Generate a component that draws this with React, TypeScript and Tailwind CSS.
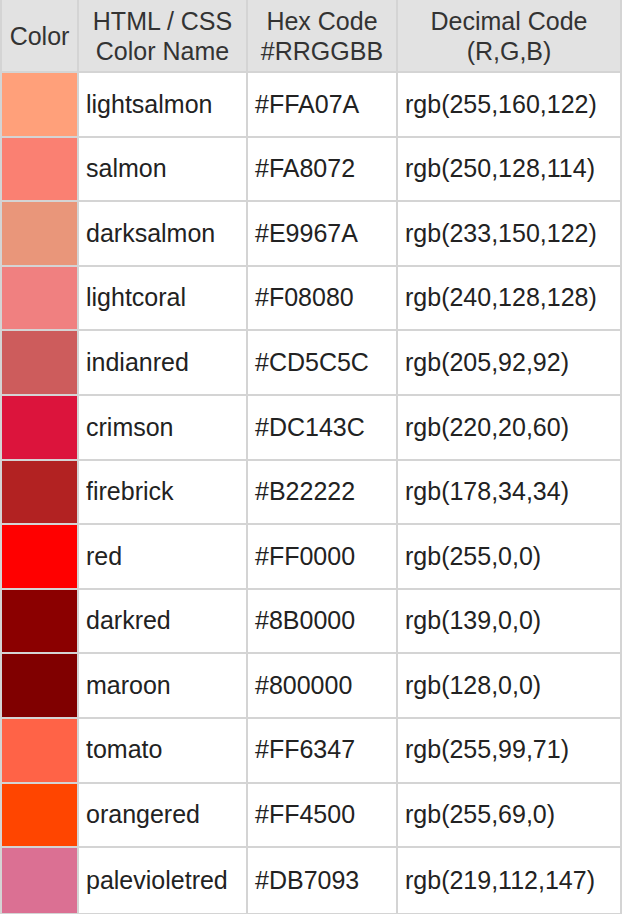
const rows = [
  { name: "lightsalmon", hex: "#FFA07A", rgb: "rgb(255,160,122)", swatch: "bg-[#FFA07A]" },
  { name: "salmon", hex: "#FA8072", rgb: "rgb(250,128,114)", swatch: "bg-[#FA8072]" },
  { name: "darksalmon", hex: "#E9967A", rgb: "rgb(233,150,122)", swatch: "bg-[#E9967A]" },
  { name: "lightcoral", hex: "#F08080", rgb: "rgb(240,128,128)", swatch: "bg-[#F08080]" },
  { name: "indianred", hex: "#CD5C5C", rgb: "rgb(205,92,92)", swatch: "bg-[#CD5C5C]" },
  { name: "crimson", hex: "#DC143C", rgb: "rgb(220,20,60)", swatch: "bg-[#DC143C]" },
  { name: "firebrick", hex: "#B22222", rgb: "rgb(178,34,34)", swatch: "bg-[#B22222]" },
  { name: "red", hex: "#FF0000", rgb: "rgb(255,0,0)", swatch: "bg-[#FF0000]" },
  { name: "darkred", hex: "#8B0000", rgb: "rgb(139,0,0)", swatch: "bg-[#8B0000]" },
  { name: "maroon", hex: "#800000", rgb: "rgb(128,0,0)", swatch: "bg-[#800000]" },
  { name: "tomato", hex: "#FF6347", rgb: "rgb(255,99,71)", swatch: "bg-[#FF6347]" },
  { name: "orangered", hex: "#FF4500", rgb: "rgb(255,69,0)", swatch: "bg-[#FF4500]" },
  { name: "palevioletred", hex: "#DB7093", rgb: "rgb(219,112,147)", swatch: "bg-[#DB7093]" },
];

const App = () => {
  return (
    <div className="bg-white w-[624px] h-[914px] font-['Liberation_Sans',Arial,sans-serif] text-[25px] text-[#222]">
      <div className="w-[622px] border-x-2 border-b-2 border-[#d4d4d4]">
        {/* header */}
        <div className="flex h-[73px] bg-[#e2e2e2] border-b-2 border-[#d4d4d4] text-[#333] leading-[30px] text-center">
          <div className="w-[77px] border-r-2 border-[#d4d4d4] flex items-center justify-center">Color</div>
          <div className="w-[169px] border-r-2 border-[#d4d4d4] flex items-center justify-center">
            HTML / CSS
            <br />
            Color Name
          </div>
          <div className="w-[150px] border-r-2 border-[#d4d4d4] flex items-center justify-center">
            Hex Code
            <br />
            #RRGGBB
          </div>
          <div className="flex-1 flex items-center justify-center">
            Decimal Code
            <br />
            (R,G,B)
          </div>
        </div>

        {rows.map((row, index) => (
          <div
            key={row.name}
            className={`flex h-[64.6px] ${index < rows.length - 1 ? "border-b-2 border-[#d4d4d4]" : ""}`}
          >
            <div className={`w-[77px] border-r-2 border-[#d4d4d4] ${row.swatch}`}></div>
            <div className="w-[169px] border-r-2 border-[#d4d4d4] flex items-center pl-[7px]">{row.name}</div>
            <div className="w-[150px] border-r-2 border-[#d4d4d4] flex items-center pl-[7px]">{row.hex}</div>
            <div className="flex-1 flex items-center pl-[7px]">{row.rgb}</div>
          </div>
        ))}
      </div>
    </div>
  );
};

export default App;
